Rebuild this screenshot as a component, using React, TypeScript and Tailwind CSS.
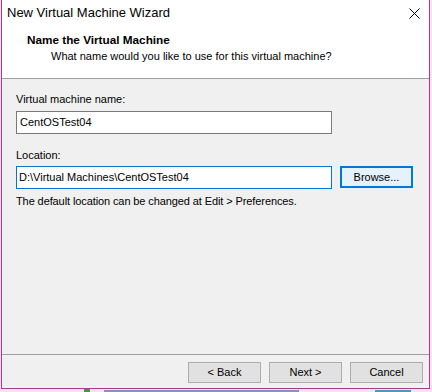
import React from 'react';

const font = { fontFamily: '"Liberation Sans", Arial, sans-serif' };

const WinButton: React.FC<{ label: string; primary?: boolean }> = ({ label, primary }) => (
  <button
    className={
      primary
        ? 'flex h-[22px] w-[73px] items-center justify-center border-2 border-[#0078d7] bg-[#e5f1fb] text-[11px] text-black'
        : 'flex h-[21px] w-[73px] items-center justify-center border border-[#adadad] bg-[#e1e1e1] text-[11px] text-black'
    }
  >
    {label}
  </button>
);

export default function App() {
  return (
    <div className="flex h-[392px] w-[432px] flex-col overflow-hidden bg-[#f4e4ee]" style={font}>
      {/* Wizard window */}
      <div className="ml-[1px] flex h-[389px] w-[429px] flex-col border-x border-b border-[#ad3a8b]">
        {/* Header */}
        <div className="flex h-[79px] flex-col border-b border-[#a0a0a0] bg-white">
          <div className="flex h-[26px] items-center justify-between pl-[5px] pr-[9px]">
            <span className="text-[13px] text-black">New Virtual Machine Wizard</span>
            <svg width="11" height="11" viewBox="0 0 11 11" className="text-black">
              <path d="M0.5 0.5 L10.5 10.5 M10.5 0.5 L0.5 10.5" stroke="currentColor" strokeWidth="1" />
            </svg>
          </div>
          <div className="mt-[7px] pl-[25px] text-[11.75px] font-bold leading-[14px] text-black">
            Name the Virtual Machine
          </div>
          <div className="mt-[2px] pl-[49px] text-[11px] leading-[14px] text-black">
            What name would you like to use for this virtual machine?
          </div>
        </div>

        {/* Body */}
        <div className="flex flex-1 flex-col bg-[#f0f0f0]">
          <div className="flex flex-col px-[14px] pt-[13px]">
            <label className="text-[11px] leading-[14px] text-black">Virtual machine name:</label>
            <div className="mt-[5px] flex h-[23px] w-[316px] items-center border border-[#7a7a7a] bg-white pl-[3px] text-[11px] text-black">
              CentOSTest04
            </div>
            <label className="mt-[14px] text-[11px] leading-[14px] text-black">Location:</label>
            <div className="mt-[4px] flex items-start gap-[8px]">
              <div className="flex h-[23px] w-[316px] items-center border border-[#0078d7] bg-white pl-[2px] text-[11px] text-black">
                D:\Virtual Machines\CentOSTest04
              </div>
              <WinButton label="Browse..." primary />
            </div>
            <p className="mt-[5px] text-[11px] leading-[14px] tracking-[-0.1px] text-black">
              The default location can be changed at Edit &gt; Preferences.
            </p>
          </div>

          <div className="flex-1" />

          <div className="flex justify-end gap-[8px] border-t border-[#a0a0a0] pb-[5px] pr-[6px] pt-[7px]">
            <WinButton label="< Back" />
            <WinButton label="Next >" />
            <WinButton label="Cancel" />
          </div>
        </div>
      </div>

      {/* Desktop peeking below the window */}
      <div className="flex h-[3px] w-full items-end">
        <div className="h-full w-[84px] bg-[#f4e4ee]" />
        <div className="h-full w-[6px] bg-[#3c9a4c]" />
        <div className="h-full w-[14px] bg-[#f4e4ee]" />
        <div className="h-[2px] w-[195px] bg-[#8e8fb6]" />
        <div className="h-full w-[76px] bg-[#f4e4ee]" />
        <div className="h-[2px] w-[36px] bg-[#4a9bb0]" />
        <div className="h-full flex-1 bg-[#f4e4ee]" />
      </div>
    </div>
  );
}
